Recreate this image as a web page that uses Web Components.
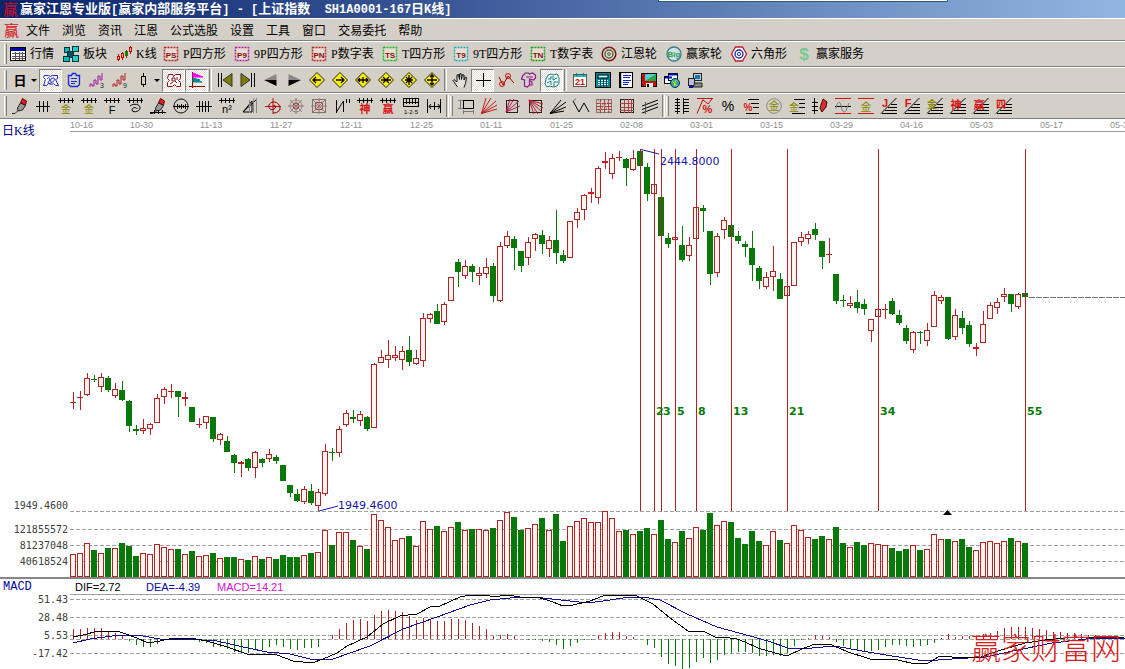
<!DOCTYPE html>
<html lang="zh-CN">
<head>
<meta charset="utf-8">
<title>赢家江恩专业版</title>
<style>
html,body{height:100%}
body{margin:0;background:#fff;overflow:hidden;font:12px/16px "Liberation Serif","Noto Sans CJK SC",serif;color:#000}
</style>
</head>
<body>
<app-window></app-window>
<script>
/* ---------- icon drawing helpers ---------- */
const P=(d,s='#000',f='none',w=1)=>`<path d="${d}" stroke="${s}" fill="${f}" stroke-width="${w}"/>`;
const T=(t,x,y,size,c,b='400',fam="'Liberation Sans','Noto Sans CJK SC',sans-serif")=>`<text x="${x}" y="${y}" font-size="${size}" fill="${c}" font-weight="${b}" text-anchor="middle" font-family="${fam}">${t}</text>`;
const C=(x,y,r,s,f='none',w=1)=>`<circle cx="${x}" cy="${y}" r="${r}" stroke="${s}" fill="${f}" stroke-width="${w}"/>`;
const R=(x,y,w,h,s,f='none',e='')=>`<rect x="${x}" y="${y}" width="${w}" height="${h}" stroke="${s}" fill="${f}" ${e}/>`;
const comb=P('M0 2.5h16M2.5 0v5M6.5 0v5M10.5 0v5M14.5 0v5');
const pen=P('M10.5 .5l4 2.5-1 4-5-2z','#600','#e02020')+P('M8.5 5l5 2.5-3 4.5-4.5 1-.5-3z','#222','#999')+P('M0 15.5h3l3-3','#222');
const fan=P('M1 15.5h15M4 12.5h12M7 9.5h9M10 6.5h6')+P('M0 15.5L15.5 0');
const badge=(t,s)=>R(1.5,1.5,13,13,s,'#e8dcd4','stroke-width="1.5" stroke-dasharray="2 1"')+T(t,8,11.5,8,'#7a1010','700');
const diamond=d=>P('M8 .5L15.5 8 8 15.5 .5 8z','#222','#fff000')+P(d,'#000','none',1.3);
const spokes=c=>P('M8 0v16M0 8h16M2 2l12 12M14 2L2 14',c);
const ICONS={
 quote:R(.5,1.5,15,13,'#000','#fff')+R(1,2,14,3,'none','#0000a8')+P('M2 7.5h13M2 10.5h13M2 12.5h13M5.5 6v8M9.5 6v8M12.5 6v8','#555'),
 blocks:R(1.5,1.5,5,5,'#033','#0bb')+R(9.5,.5,6,5,'#033','#2cc')+R(4.5,5.5,6,6,'#033','#056')+R(.5,10.5,6,5,'#033','#0bb')+R(9.5,9.5,6,6,'#033','#2cc'),
 kline:P('M2.5 8v7M6.5 6v8M10.5 4v8M14.5 0v8','#c00')+R(1.5,10.5,2,3,'#c00','#fbb')+R(5.5,7.5,2,4,'#c00','#fbb')+R(9.5,5.5,2,4,'#080','#080')+R(13.5,1.5,2,4,'#c00','#fbb'),
 ps:badge('PS','#c02020'),p9:badge('P9','#b020a0'),pn:badge('PN','#c02020'),ts:badge('TS','#10c020'),t9:badge('T9','#10b8b8'),tn:badge('TN','#10a010'),
 wheel:C(8,8,6.8,'#7a1818','#e8d8c8',1.6)+C(8,8,4,'#357045','none',1.4)+C(8,8,1.4,'#555','none'),
 big:C(8,8,7,'#3a7a9a','#cfe4e0',1.3)+T('Big',8,11,8,'#2c9a50','700'),
 hex:P('M4.5 1h7l4 7-4 7h-7L.5 8z','#c01830','#fff',1.3)+C(8,8,4,'#2030b0','none',1.4)+C(8,8,1.6,'#2030b0','#fff'),
 dollar:T('$',8,14,17,'#7cc890','700'),
 day:T('日',8,13,13,'#000','700'),
 scribble:P('M1.5 3.5h4l2 1 2-1h5v3l-2 1 3 6h-3l-2-2-2 1-3-1-2 2h-3l2-6-2-2zM4 7c2-3 4 0 2 2s-1 3 2 2 5-5 2-5-3 4-1 5','#1828c8','#fff'),
 clip:P('M2.5 3.5h3l1-2h3l1 2h3v9l-2 2h-7l-2-2z','#1828d8','none',1.3)+P('M5 6.5h6M5 9.5h6M5 11.5h4','#1828d8'),
 w3:P('M1 15v-3h2v2h2V8h2v4h2V4h2v4h2V1','#a018a0')+T('3',13,16,7,'#222'),
 w9:P('M1 15v-3h2v2h2V8h2v4h2V4h2v4h2V1','#b02020')+T('9',13,16,7,'#222'),
 bar:P('M8.5 1v3M8.5 12v3')+R(6.5,4.5,4,8,'#000'),
 gear:P('M2.5 2.5h4l1 2 2-2h5v4l-2 2 2 2v4h-4l-2-2-2 2h-5v-4l2-2-2-2zM6 6h3v3H6zM9 9l2 2M4 12l3-2M11 5v3','#8a1010','#fff'),
 flag:P('M3.5 0v16M0 14.5h16','#900')+P('M4 1l10 4H4z','#f0f','#f0f')+P('M4 6l7 2-2 1 4 1H4z','#088','#088'),
 first:P('M1.5 1v14M4.5 1v14')+P('M15 1.5v13L6 8z','#333','#7c7c00'),
 last:P('M14.5 1v14M11.5 1v14')+P('M1 1.5v13L10 8z','#333','#7c7c00'),
 prev:P('M13.5 2v6H1z','none','#888')+P('M1 8h12.5v6z','none','#000'),
 next:P('M2.5 2v6H15z','none','#888')+P('M15 8H2.5v6z','none','#000'),
 d1:diamond('M4 8h8M7 5L4 8l3 3'),d2:diamond('M4 8h8M9 5l3 3-3 3'),d3:diamond('M3 8h10M5 6L3 8l2 2M11 6l2 2-2 2M8 5v6'),
 d4:diamond('M3 8h10M5 5l3 3-3 3M11 5L8 8l3 3'),d5:diamond('M8 3v10M5 5l3 3 3-3M5 11l3-3 3 3M4 8h8'),d6:diamond('M8 2v12M6 5l2-2 2 2M6 11l2 2 2-2M3 8h10'),
 hand:P('M5.5 15L1 8.5l1-1 3 2.5V3l1.5-.5 1 5V2l1.5-.5.5 6 1-5 1.5.5v5l1.5-3 1 .5-1 6-1.5 4','#111','#e4e0d8'),
 cross:P('M8.5 1v14M1 8.5h15','#000'),
 path:P('M1 5l4 8 5-9 6 7','#900')+C(4,12,2.5,'#c01010')+C(10,4,2.5,'#c01010'),
 blob:P('M1.5 4l3-3h3l1 1 3-1 3 2v3l-2 2-4-1v6l-2 2-3-1V8l-3-1zM5 5h7M8 8l3 2v3H9','#8a1890','none',1.2),
 brain:P('M2 7l2-4 3-1 2 1 4-1 2 4v5l-2 3-4 1-3-1-3 1-2-3zM4 7h3V4M9 4v4l4-2M3 11l4-2v4M10 14v-4h4','#108080','#fff'),
 cal:R(1.5,2.5,13,12,'#555','#fff')+R(2,3,12,2,'none','#2bb')+T('21',8,13,9,'#d01010','700')+P('M4.5 1v3M11.5 1v3','#088'),
 calc:R(.5,.5,15,15,'#000','#0a8a96')+R(3,3,10,3,'#000','#bff')+P('M3 8.5h10M3 10.5h10M3 12.5h10','#dff','none',1)+P('M5.5 7v8M8.5 7v8M11.5 7v8','#046'),
 note:R(1.5,.5,13,15,'#000','#fff')+P('M2.5 1v14','#000','none',1.5)+P('M5 3.5h8M5 5.5h7M5 8.5h8M5 10.5h6M5 12.5h5','#0a1fd0'),
 disk:R(.5,1.5,15,13,'#000','#c01010')+R(4,2,11,7,'none','#5cd')+P('M4 9l11-7v7z','none','#2a4')+R(5,11,7,4,'none','#eee')+R(6,12,2,3,'none','#000'),
 globe:R(.5,4.5,8,7,'#000','#fff')+R(4.5,1.5,9,7,'#000','#fff')+P('M1 5.5h7M5 2.5h8','#0010b0','none',2)+C(11,11,4.5,'#036','#3a9')+P('M8 9l5 5M12 8l-2 6','#dd2'),
 pcs:R(6.5,1.5,8,7,'#222','#c8c8c8')+R(8,3,5,4,'none','#0a7ac0')+R(1.5,6.5,6,7,'#222','#bbd')+P('M8 11h7v4H6z','#222','#888')+P('M2 15h4','#00c','none',2),
 pen,ticks3:P('M1 8.5h14M4.5 3v11M8.5 3v11M12.5 3v11'),
 gold1:comb+T('金',8,15,10,'#8a8a00'),gold2:comb+T('金',8,15,10,'#8a8a00'),
 fcomb:comb+T('F',8,15.5,11,'#000'),
 spiral:comb+P('M3 8c4-3 10-2 10 2s-8 5-8 2 5-3 5-1'),
 penr:pen+P('M0 14.5h16M4.5 12v4M8.5 12v4M12.5 12v4'),
 ruler:C(8,8,7,'#111')+P('M0 8.5h16M4.5 6v5M6.5 7v3M8.5 6v5M10.5 7v3M12.5 6v5'),
 ticks4:P('M0 8.5h16M3.5 3v11M6.5 3v11M9.5 3v11M12.5 3v11'),
 n2:comb+T('n²',8,15,11,'#000'),
 tri:P('M1 14l9-11v11zM1 14l13-12')+P('M7.5 2v13M11.5 0v15M14.5 0v15','#888'),
 rspiral:P('M8 0v16M0 8.5h16','#c01010')+P('M8 8c2-2 4 1 1 3s-6-1-5-4 7-5 10 0-1 8-6 8','#800'),
 web:C(8,8,6,'#888')+C(8,8,3,'#a33')+spokes('#977'),
 sweb:R(1.5,1.5,13,13,'#777')+R(4.5,4.5,7,7,'#a44')+spokes('#977'),
 nn:P('M2.5 2v13M2.5 14l7-11v11M12.5 1v4M15.5 1v4'),
 shen:comb+T('神',8,15,11,'#d81010','700'),ying:comb+T('赢',8,15,11,'#d81010','700'),
 numr:R(.5,.5,15,8,'#000')+P('M3.5 1v5M6.5 1v5M9.5 1v5M12.5 1v5M0 4.5h16')+T('1·2·5',8,15.5,6,'#000'),
 span:P('M1.5 1v14M14.5 1v14M8.5 4v8M3 8.5h11M5 6L3 8.5 5 11M12 6l2 2.5-2 2.5'),
 box:R(5.5,2.5,10,8,'#000')+P('M2.5 2v9M0 2.5h5M0 10.5h5M5 13.5h10M5.5 12v4M15.5 12v4','#777'),
 rfan:P('M.5 15.5L5 0M.5 15.5L10 0M.5 15.5L15 3M.5 15.5L16 7M.5 15.5L16 11','#c01818'),
 bfan:R(2.5,2.5,11,12,'#222')+P('M2 14L6 1M2 14L10 1M2 14L15 3M2 14l14-6','#b01850'),
 bfan2:R(2.5,2.5,12,12,'#222')+P('M2 2l5 14M2 2l9 14M2 2l13 12M2 2l14 8M2 2l14 4','#b01830'),
 kfan:P('M0 15.5L11 2M0 15.5L16 4M0 15.5L16 9M0 15.5L14 13'),
 vee:P('M0 3l6 11 5-9 5 9')+P('M0 3l3-2','#777'),
 grid:R(.5,1.5,15,13,'#877')+P('M4.5 1v14M8.5 1v14M12.5 1v14M0 5.5h16M0 8.5h16M0 11.5h16','#a44')+P('M2 2l12 12M14 2L2 14','#a99'),
 grid2:R(1.5,1.5,13,13,'#222')+P('M5.5 1v14M9.5 1v14M12.5 1v14M1 5.5h14M1 9.5h14M1 12.5h14','#a44'),
 para:P('M0 8L16 2M0 11.5L16 5.5M0 15L16 9')+P('M3.5 4v12','#555'),
 cols:P('M3.5 0v16M9.5 0v16M1 1.5h5M1 4.5h5M1 7.5h5M1 10.5h5M1 13.5h5M9 1.5h6M9 4.5h6M9 7.5h6M9 10.5h6M9 13.5h6'),
 rpct:P('M0 .5h16M0 15.5l6-14M6 2l5 4 4-5','#c01010')+T('%',10.5,15,11,'#d81010','700'),
 pct:T('%',8,13,14,'#000'),
 lpct:P('M5 1.5h11M8 5.5h8M10 9.5h6M3 15.5h13')+T('%',5,13,10,'#d81010','700'),
 goldc:C(8,8,7.3,'#8a8a8a')+T('金',8,12,11,'#8a8a00'),
 goldl:P('M5 1.5h11M10 5.5h6M10 9.5h6M3 15.5h13')+T('金',5,13,10,'#8a8a00'),
 penticks:P('M2.5 0v16M0 4.5h6M0 8.5h6M0 12.5h6')+P('M11 1l4 3-1 5-4 5-2-4z','#400','#d83030'),
 wave:P('M0 .5h16M0 15.5h16','#d81010')+P('M0 8.5h16')+P('M1 11c1-8 4-9 5-3s4 9 6 2l2-5','#777'),
 goldr:P('M0 .5h16M0 15.5h16','#d81010')+T('金',8,13,11,'#8a8a00'),
 jf:fan+T('J',4,9,11,'#d81010','700'),ff:fan+T('F',4,9,11,'#d81010','700'),gf:fan+T('金',5,10,10,'#8a8a00','700'),
 sf:fan+T('神',6,11,11,'#d81010','700'),yf:fan+T('赢',6,11,11,'#d81010','700'),qf:fan+T('四',5,10,10,'#d81010','700')
};

const define=(name,html)=>customElements.define(name,class extends HTMLElement{
  connectedCallback(){
    if(this.shadowRoot)return;
    const t=document.createElement('template');
    t.innerHTML=typeof html==='function'?html(this):html;
    this.attachShadow({mode:'open'}).append(t.content.cloneNode(true));
  }
});

/* ---------- chrome ---------- */
define('tool-icon',el=>`<style>:host{display:block;width:16px;height:16px;flex:none}svg{display:block;overflow:visible}</style>
<svg width="16" height="16" viewBox="0 0 16 16" aria-hidden="true">${ICONS[el.getAttribute('name')]||''}</svg>`);

define('title-bar',`<style>
:host{display:flex;align-items:center;height:18px;position:relative;padding-left:3px;gap:2px;
 background:linear-gradient(90deg,#0a246a 0%,#3a5898 40%,#6a8cc0 72%,#92b6e2 100%);color:#fff;white-space:pre}
.logo{font:15px/18px "Noto Sans CJK SC",sans-serif;color:#c8102c;width:15px}
h1{margin:0;font:bold 13px/18px "Noto Sans CJK SC",sans-serif}
code{font:bold 12px/18px "Liberation Mono",monospace}
.tab{position:absolute;top:0;left:58.5%;right:15.7%;height:1px;background:#fff;border:1px solid #2c5c70;border-top:0}
</style><span class="logo">赢</span><h1>赢家江恩专业版<code>[</code>赢家内部服务平台<code>] - [</code>上证指数<code>  SH1A0001-167</code>日<code>K</code>线<code>]</code></h1><span class="tab"></span>`);

define('menu-bar',`<style>
:host{display:flex;align-items:center;height:21px;background:#d4d0c8;border-top:1px solid #fff;border-bottom:1px solid #808080;padding-left:4px;gap:12px}
.logo{font:15px/20px "Noto Sans CJK SC",sans-serif;color:#d81020;width:15px;margin-right:-5px}
</style><span class="logo">赢</span><slot></slot>`);

define('menu-item',`<style>:host{display:block}button{all:unset;display:block;font:12px/20px "Noto Sans CJK SC",sans-serif;white-space:nowrap}</style><button type="button"><slot></slot></button>`);

define('tool-bar',`<style>
:host{display:flex;align-items:center;height:24px;background:#d4d0c8;border-top:1px solid #fff;border-bottom:1px solid #808080;overflow:hidden}
</style><slot></slot>`);

define('tool-grip',`<style>:host{display:block;width:1px;height:20px;margin:0 1px 0 4px;border-left:1px solid #fff;border-right:1px solid #808080;flex:none}</style>`);
define('tool-sep',`<style>:host{display:block;width:1px;height:22px;margin:0 1px;border-left:1px solid #808080;border-right:1px solid #fff;flex:none}</style>`);

define('icon-button',el=>`<style>
:host{display:block;flex:none}
button{all:unset;box-sizing:border-box;display:flex;align-items:center;justify-content:center;width:23px;height:23px;border:1px solid transparent}
:host([pressed]) button{border-color:#808080 #fff #fff #808080;background:repeating-conic-gradient(#fff 0 25%,#e4e0d8 0 50%) 0 0/2px 2px}
:host([menu]) button{width:31px;gap:3px;padding-left:2px}
i{border:3px solid transparent;border-top-color:#000;border-bottom:0}
</style><button type="button" aria-label="${el.getAttribute('icon')}"><tool-icon name="${el.getAttribute('icon')}"></tool-icon>${el.hasAttribute('menu')?'<i></i>':''}</button>`);

define('label-button',el=>`<style>
:host{display:block;flex:none;margin-right:9px}
button{all:unset;display:flex;align-items:center;gap:4px;height:22px}
span{width:${el.getAttribute('chars')*6}px;font:12px/22px "Liberation Serif","Noto Sans CJK SC",serif;white-space:nowrap}
</style><button type="button"><tool-icon name="${el.getAttribute('icon')}"></tool-icon><span><slot></slot></span></button>`);

/* ---------- market data: high, body top, body bottom, low (screen units) ---------- */
const K=`u392,402,402,409 u391,397,397,410 u373,378,395,396 d375,379,379,382 u373,377,387,392 d376,378,390,392 u383,389,396,398 d381,390,400,401 d400,401,426,432 d425,429,431,435
u419,428,431,434 u423,424,429,435 u394,398,423,423 u387,389,397,404 u384,391,391,398 d391,391,397,417 u392,397,399,406 d407,407,422,422 u418,424,424,428 u416,416,423,429
d417,417,439,442 u433,434,440,445 d436,441,452,452 d454,455,463,473 u461,462,464,477 d458,459,468,471 u451,452,468,478 d458,459,463,467 u449,454,459,462 d455,457,461,464
d465,465,481,481 d485,485,493,497 d489,494,501,502 u486,489,502,504 d484,491,503,505 u489,492,506,511 u444,451,494,496 d448,452,452,461 u426,429,453,457 u410,413,425,427
d410,417,419,423 u411,414,421,426 d416,417,429,431 u363,364,428,428 u350,357,363,363 u340,355,360,368 u346,355,358,361 u346,351,360,370 d336,350,362,366 u350,358,364,365
u313,318,361,367 u313,314,319,323 d304,311,324,324 u302,304,322,325 u277,277,301,301 d259,262,272,287 u260,266,276,279 d264,266,272,282 u267,273,276,285 u258,267,274,278
d263,266,296,302 u242,246,301,302 u231,236,246,248 d236,239,248,270 d251,251,266,272 u237,242,258,265 u233,234,239,251 d230,235,244,254 u236,240,249,257 d210,240,253,264
d250,255,261,263 u221,221,258,258 u208,212,220,228 u194,195,210,220 u188,192,193,203 u166,168,198,204 u152,161,162,169 u154,158,174,179 u151,157,157,161 d158,159,168,186
u150,158,170,171 d149,151,166,166 d163,167,194,201 u184,184,194,194 d197,197,236,236 d233,238,244,248 u237,237,240,240 d226,245,260,262 u237,245,256,261 u207,207,239,239
d205,208,211,232 d231,231,274,285 u233,236,273,277 u217,220,230,239 d225,225,237,237 d231,236,241,244 d241,244,247,257 d231,248,265,281 d266,268,281,289 u272,277,287,289
u246,271,277,291 d273,279,299,299 u286,286,296,296 u242,242,286,286 u232,237,242,246 u231,234,239,244 d223,229,235,240 d241,241,257,269 u238,254,254,263 d274,274,301,304
d295,300,300,307 u296,303,306,308 d290,302,308,313 d299,304,309,315 u319,319,331,342 u309,309,317,317 u304,309,309,319 d298,301,314,315 d310,315,323,325 d325,328,341,344
u331,332,350,353 d331,332,332,344 u323,330,341,346 u291,295,327,327 u295,297,301,304 d297,297,339,340 u309,315,337,340 d311,318,328,334 d321,325,344,347 u343,347,348,356
u311,324,343,343 u302,305,319,319 u298,302,308,314 u288,294,297,302 d294,294,304,312 u293,294,307,309 d293,293,297,297`
 .split(/\s+/).map(s=>({up:s[0]==='u',v:s.slice(1).split(',').map(Number)}));
const VOL=[554,553,543,550,553,548,548,543,546,556,553,554,544,547,549,549,554,551,556,555,553,558,557,557,559,560,556,559,557,559,555,557,557,555,553,552,530,545,532,532,540,546,549,514,520,527,540,538,536,546,521,529,526,531,527,522,530,529,529,530,528,520,512,517,530,528,524,518,530,514,541,526,521,518,522,522,511,518,531,530,534,531,528,534,520,539,542,531,538,527,530,513,525,521,522,538,544,531,541,545,531,540,543,525,530,537,539,536,539,527,543,547,542,545,543,544,545,548,551,549,545,550,549,534,539,539,541,539,547,550,542,541,543,541,538,541,543];
const HIST=[10,10,11,11,11,8,6,3,-2,-6,-8,-8,-5,0,1,1,1,0,-3,-4,-8,-8,-10,-13,-14,-14,-11,-11,-8,-6,-8,-10,-11,-9,-9,-8,0,4,10,16,19,20,18,24,28,29,28,27,23,19,21,20,18,18,20,20,19,16,13,10,3,4,5,3,0,-1,-1,-2,-3,-6,-10,-7,-4,-1,-1,4,6,7,7,3,2,0,-6,-9,-18,-25,-27,-30,-29,-23,-19,-24,-21,-16,-14,-13,-13,-14,-17,-17,-16,-17,-14,-7,-1,1,4,3,2,-3,-7,-9,-12,-12,-12,-11,-8,-6,-6,-7,-8,-7,-6,-4,1,5,2,3,3,2,5,6,8,11,12,12,12,11,10,9,7,7,6,6,5,4,4,3,2,1];
const DIF='73,637 83,635 98,631 120,632 137,638 148,643 160,641 173,638 190,638 207,641 227,647 247,654 277,655 293,661 312,663 323,659 337,653 347,646 367,637 383,624 400,616 417,614 430,607 440,606 460,597 470,595 487,595 493,597 508,595 520,597 537,597 553,602 563,606 573,605 590,601 603,596 623,595 637,596 653,604 670,618 688,631 703,631 717,638 723,637 737,639 745,642 758,648 775,653 787,656 802,649 815,644 832,645 848,652 870,659 898,660 915,664 928,663 940,656 952,657 965,657 978,658 998,651 1025,643 1045,640 1065,638 1125,637';
const DEA='73,643 90,639 120,635 143,636 160,639 187,639 217,641 243,647 267,652 290,654 310,659 333,659 350,653 370,646 403,629 437,617 470,605 490,600 520,597 543,598 570,601 587,603 603,601 623,598 643,597 660,600 687,614 717,627 750,636 768,641 788,648 812,648 835,646 862,651 892,656 925,661 952,659 985,657 1018,650 1052,643 1095,638 1125,638';
const X0=73,STEP=7,RED='#b02424',GREEN='#087808',PALE='#fff3f0';
const cx=i=>X0+STEP*i;
const fill=(x,y,w,h,c)=>`<rect x="${x}" y="${y}" width="${w}" height="${h}" fill="${c}"/>`;
const hollow=(x,y,w,h,c)=>fill(x,y,w,h,c)+fill(x+1,y+1,w-2,Math.max(0,h-2),PALE);
const dash=y=>`<line x1="70" x2="100%" y1="${y}.5" y2="${y}.5" stroke="#a0a0a0" stroke-dasharray="4 2"/>`;
const scale=(t,y)=>`<text class="s" x="68" y="${y+4}" text-anchor="end">${t}</text>`;
const pane=(top,height,body)=>`<style>
:host{display:block;${height?`height:${height}px`:'flex:1;min-height:0'}}
svg{display:block;width:100%;height:100%;overflow:visible}
.s{font:10px "DejaVu Sans Mono",monospace;fill:#404040}
.v{font:11px "DejaVu Sans",sans-serif;fill:#1818a8}
.n{font:bold 11px "DejaVu Sans",sans-serif;fill:#087808}
</style><svg><g transform="translate(0,${-top})">${body}</g></svg>`;

define('date-axis',`<style>
:host{display:flex;height:12px;margin-left:70px;border-bottom:1px solid #a0a0a0;overflow:hidden;font:9px/13px "Liberation Sans",sans-serif;color:#909090}
span{flex:none;width:70px;white-space:nowrap}span:first-of-type{width:60px}span:last-of-type{width:auto}
</style>${'10-16 10-30 11-13 11-27 12-11 12-25 01-11 01-25 02-08 03-01 03-15 03-29 04-16 05-03 05-17 05-3'.split(' ').map(d=>`<span>${d}</span>`).join('')}`);

define('price-pane',()=>{
  let s=dash(511)+scale('1949.4600',505);
  K.forEach((k,i)=>{const x=cx(i),[h,t,b,l]=k.v,c=k.up?RED:GREEN;
    s+=fill(x,h,1,Math.max(1,l-h),c);
    if(b-t<2)s+=fill(x-3,t,6,b-t+1,k.up&&b>t?'#d01818':c);
    else if(k.up)s+=hollow(x-3,t,6,b-t,c);
    else s+=fill(x-3,t,6,b-t,c);
  });
  [640,654,661,675,696,731,787,878,1025].forEach(x=>s+=fill(x,149,1,362,RED));
  [['2',656],['3',663],['5',677],['8',698],['13',733],['21',789],['34',880],['55',1027]].forEach(([t,x])=>s+=`<text class="n" x="${x}" y="415">${t}</text>`);
  s+=P('M641 149.5L659 154','#1818a8')+P('M319 511L338 506','#1818a8');
  s+=`<text class="v" x="660" y="165">2444.8000</text><text class="v" x="338" y="509">1949.4600</text>`;
  s+=`<line x1="1029" x2="100%" y1="297.5" y2="297.5" stroke="#707070" stroke-dasharray="6 1"/>`;
  s+=`<path d="M943 515h9l-4.5-5z"/>`;
  return pane(132,381,s);
});

define('volume-pane',()=>{
  let s=dash(529)+dash(545)+dash(561)+scale('121855572',529)+scale('81237048',545)+scale('40618524',561);
  VOL.forEach((y,i)=>{const x=cx(i)-3;
    s+=K[i].up?hollow(x,y,6,577-y,RED):fill(x,y,6,577-y,GREEN);});
  return pane(513,64,s);
});

define('macd-legend',`<style>
:host{display:grid;grid-template-columns:72px 71px 71px 1fr;height:15px;padding-left:3px;border-top:2px solid #868686;
 font:11px/16px "Liberation Sans",sans-serif;white-space:nowrap;background:linear-gradient(#a0a0a0,#a0a0a0) 70px 100%/100% 1px no-repeat;padding-bottom:1px}
b{font:12px/16px "Liberation Mono",monospace;color:#0808a0}.dea{color:#0808a0}.macd{color:#d010d0}
</style><b>MACD</b><span>DIF=2.72</span><span class="dea">DEA=-4.39</span><span class="macd">MACD=14.21</span>`);

define('macd-pane',()=>{
  let s=[599,617,635,653].map(dash).join('')+dash(639);
  s+=scale('51.43',599)+scale('28.48',617)+scale('5.53',635)+scale('-17.42',653);
  HIST.forEach((h,i)=>{if(h)s+=fill(cx(i),h>0?639-h:639,1,Math.abs(h),h>0?RED:GREEN);});
  s+=`<g shape-rendering="crispEdges" fill="none"><polyline points="${DEA}" stroke="#101090"/><polyline points="${DIF}" stroke="#000"/></g>`;
  return pane(595,0,s);
});

define('chart-view',`<style>
:host{display:flex;flex-direction:column;flex:1;min-height:0;position:relative;background:#fff}
h2{position:absolute;left:2px;top:4px;margin:0;font:12px/16px "Liberation Serif","Noto Sans CJK SC",serif;color:#000080}
.mark{position:absolute;right:4px;bottom:5px;font:300 30px/36px "Noto Sans CJK SC",sans-serif;color:#d82020}
</style><h2>日K线</h2><date-axis></date-axis><price-pane></price-pane><volume-pane></volume-pane><macd-legend></macd-legend><macd-pane></macd-pane><div class="mark">赢家财富网</div>`);

const menus='文件 浏览 资讯 江恩 公式选股 设置 工具 窗口 交易委托 帮助'.split(' ').map(m=>`<menu-item>${m}</menu-item>`).join('');
const labels=[['quote',4,'行情'],['blocks',4,'板块'],['kline',3,'K线'],['ps',7,'P四方形'],['p9',8,'9P四方形'],['pn',7,'P数字表'],['ts',7,'T四方形'],['t9',8,'9T四方形'],['tn',7,'T数字表'],['wheel',6,'江恩轮'],['big',6,'赢家轮'],['hex',6,'六角形'],['dollar',8,'赢家服务']]
 .map(([i,n,t])=>`<label-button icon="${i}" chars="${n}">${t}</label-button>`).join('');
/* "*" marks a pressed button, "+" one with a drop-down arrow */
const buttons=list=>list.split(' ').map(n=>n==='|'?'<tool-sep></tool-sep>':n==='#'?'<tool-grip></tool-grip>':
  `<icon-button icon="${n.replace(/[*+]$/,'')}"${n.endsWith('*')?' pressed':''}${n.endsWith('+')?' menu':''}></icon-button>`).join('');

define('app-window',`<style>:host{display:flex;flex-direction:column;height:100vh;min-width:0}tool-bar,menu-bar,title-bar{flex:none}
.labels tool-grip,.labels{margin-right:3px}
.labels{margin-right:0}
tool-sep + tool-grip{margin-left:0;margin-right:1px}</style>
<title-bar></title-bar><menu-bar>${menus}</menu-bar>
<tool-bar class="labels"><tool-grip></tool-grip>${labels}</tool-bar>
<tool-bar>${buttons('# day+ scribble* clip w3 w9 bar+ gear* flag* | first last prev next d1 d2 d3 d4 d5 d6 | hand cross* path blob brain* | cal calc note disk globe pcs')}</tool-bar>
<tool-bar>${buttons('# pen ticks3 gold1 gold2 fcomb spiral penr ruler ticks4 n2 tri rspiral web sweb nn shen ying numr span | # box rfan bfan bfan2 kfan vee grid grid2 para | # cols rpct pct lpct goldc goldl penticks wave goldr jf ff gf sf yf qf')}</tool-bar>
<chart-view></chart-view>`);
</script>
</body>
</html>
